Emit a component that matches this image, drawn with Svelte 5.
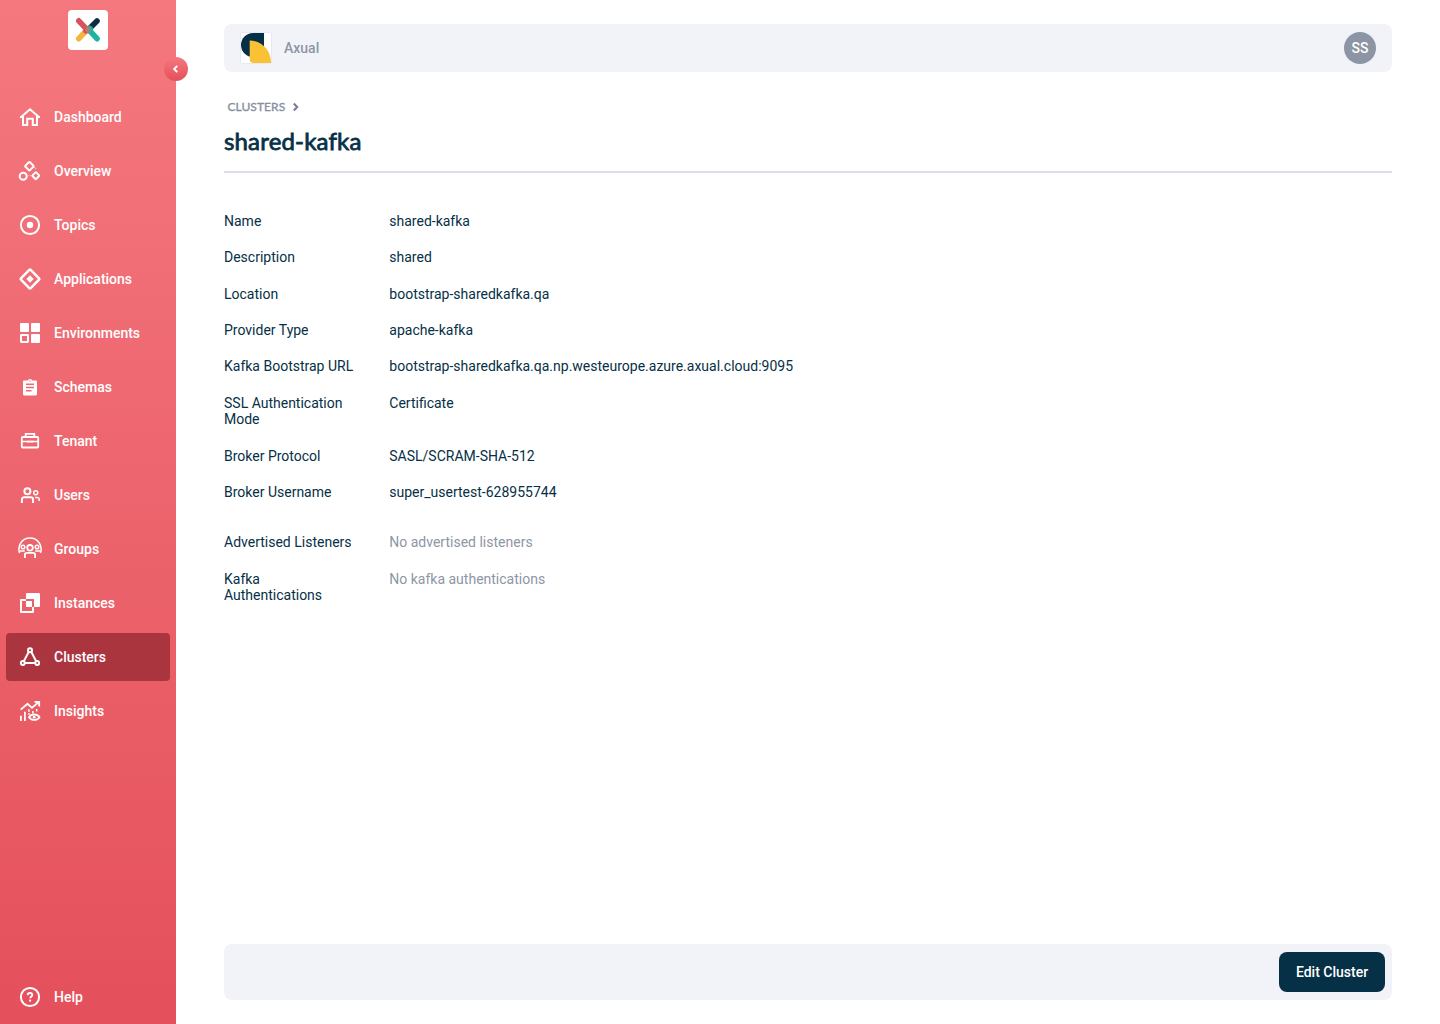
<script>
  const nav = ['Dashboard', 'Overview', 'Topics', 'Applications', 'Environments', 'Schemas', 'Tenant', 'Users', 'Groups', 'Instances', 'Clusters', 'Insights'];
  const active = 'Clusters';
  const details = [
    ['Name', 'shared-kafka'],
    ['Description', 'shared'],
    ['Location', 'bootstrap-sharedkafka.qa'],
    ['Provider Type', 'apache-kafka'],
    ['Kafka Bootstrap URL', 'bootstrap-sharedkafka.qa.np.westeurope.azure.axual.cloud:9095'],
    ['SSL Authentication Mode', 'Certificate'],
    ['Broker Protocol', 'SASL/SCRAM-SHA-512'],
    ['Broker Username', 'super_usertest-628955744']
  ];
  const extras = [
    ['Advertised Listeners', 'No advertised listeners'],
    ['Kafka Authentications', 'No kafka authentications']
  ];
</script>

{#snippet icon(name)}
  <svg class="icon" viewBox="0 0 24 24" width="24" height="24">
    {#if name === 'Dashboard'}
      <path class="line" d="M2.800 12.300 12 4.300l9.200 8M2 12h3v8h4.200v-6.300h5.600V20H19v-8h3" />
    {:else if name === 'Overview'}
      <g class="line"><circle cx="5.200" cy="17.300" r="3.500" /><rect x="8.200" y="4" width="6.400" height="6.400" rx=".8" transform="rotate(45 11.4 7.2)" /><rect x="15.200" y="14.100" width="5.200" height="5.200" rx=".8" transform="rotate(45 17.8 16.7)" /></g>
      <path class="thin" d="M15.700 8.500l1.800.2.300 2.200M10.200 16.700h3" stroke-dasharray="1 1" opacity=".7" />
    {:else if name === 'Topics'}
      <circle class="line" cx="12" cy="12" r="9.100" /><circle cx="12" cy="12" r="3.200" />
    {:else if name === 'Applications'}
      <rect class="bold" x="5.100" y="5.100" width="13.800" height="13.800" rx="1" transform="rotate(45 12 12)" />
      <path d="M12 8.300 15.700 12 12 15.700 8.300 12z" />
    {:else if name === 'Environments'}
      <rect x="2" y="2" width="9" height="9" rx="1" /><rect x="13" y="2" width="9" height="9" rx="1" /><rect x="13" y="13" width="9" height="9" rx="1" /><rect class="line" x="3" y="14" width="7" height="7" rx=".4" />
    {:else if name === 'Schemas'}
      <path fill-rule="evenodd" d="M6.200 5.500H10a2.100 2.100 0 0 1 4 0h3.800c.7 0 1.200.5 1.200 1.200v12.600c0 .7-.5 1.200-1.200 1.200H6.200c-.7 0-1.200-.5-1.200-1.200V6.700c0-.7.5-1.200 1.200-1.200zM8 8.600v1.500h8V8.600zM8 11.800v1.500h8v-1.500zM8 15v1.500h5.500V15zM11.400 5.400v1h1.200v-1z" />
    {:else if name === 'Tenant'}
      <rect class="heavy" x="3.800" y="8" width="16.400" height="10.500" rx="1" /><path class="heavy" d="M7.700 8V4.900h8.600V8" /><path class="mid" d="M4 12.500h5.500M14.500 12.500H20" /><path d="M9 11.600h6v2H9z" />
    {:else if name === 'Users'}
      <circle class="line" cx="9.400" cy="8.200" r="3" /><path class="line" d="M3.900 20v-3.500c0-1.400.8-2.300 2.300-2.300h6.500c1.500 0 2.300.9 2.300 2.300V20" /><circle class="mid" cx="17.700" cy="9.800" r="2" /><path class="mid" d="M17 14.400h2c1.400 0 2.200.7 2.200 2V18" />
    {:else if name === 'Groups'}
      <path class="mid" d="M1.600 16A11.100 11.100 0 1 1 22.400 16" /><circle class="heavy" cx="12" cy="10.800" r="2.800" /><circle class="mid" cx="5" cy="10" r="1.800" /><circle class="mid" cx="19" cy="10" r="1.800" />
      <path class="heavy" d="M6.900 21v-3.300c0-1.200.7-1.900 1.900-1.900h6.400c1.200 0 1.900.7 1.900 1.900V21" /><path class="mid" d="M2 13.900h4.800M17.200 13.900H22" />
    {:else if name === 'Instances'}
      <path fill-rule="evenodd" d="M9 2h12a1 1 0 0 1 1 1v12a1 1 0 0 1-1 1H8V3a1 1 0 0 1 1-1zM3 8h13v13a1 1 0 0 1-1 1H3a1 1 0 0 1-1-1V9a1 1 0 0 1 1-1zM4 10v10h10V10z" />
    {:else if name === 'Clusters'}
      <g class="line"><path d="m10.900 6.500-5.200 10M13.100 6.500l5.200 10M6 18h12" /><circle cx="12" cy="5.200" r="2" /><circle cx="4.800" cy="18" r="1.900" /><circle cx="19.200" cy="18" r="1.900" /></g>
    {:else if name === 'Insights'}
      <path class="heavy" d="M2.700 10.600 9.500 4.800l4.500 4L21 2.900M16.500 2.800h4.700v4.600M2.900 22v-5.200M6.900 22v-9.200" /><path class="mid" d="M10.900 10.200v5.500M14.900 12v2.400M18.700 10v3" stroke-dasharray="2.500 1.200" />
      <path class="heavy" d="M11 18.200c2.300-3.600 8.200-3.600 10.500 0-2.300 3.600-8.200 3.600-10.500 0z" /><circle cx="16.200" cy="18.200" r="1.400" />
    {:else if name === 'Help'}
      <circle class="line" cx="12" cy="12" r="9.100" /><path class="heavy" d="M9.700 10.300c0-1.600 1-2.300 2.300-2.300s2.300.8 2.300 2.100c0 1.500-2.100 1.500-2.100 3.200" /><circle cx="12.100" cy="15.700" r="1.100" />
    {/if}
  </svg>
{/snippet}

<div class="app">
  <aside>
    <div class="brand">
      <svg viewBox="0 0 40 40" width="40" height="40">
        <g fill="none" stroke-width="5.600" stroke-linecap="round">
          <path stroke="#0a2f43" d="M29 11 21 19" /><path stroke="#f2b63f" d="M10.800 28.700 17 22" />
          <path stroke="#1db39f" d="M22 18.500 21 20 29 28.700" /><path stroke="#d9535c" d="M10.800 10.800 19 19.500 18 21" />
        </g>
        <path fill="#a48676" d="m19.800 16 3 3.500-2.500 4.200-3.300-3.700z" />
      </svg>
    </div>
    <button class="collapse" aria-label="Collapse">
      <svg viewBox="0 0 24 24" width="24" height="24"><path d="m13.200 8.900-3 3.100 3 3.100" /></svg>
    </button>
    <nav>
      {#each nav as item}
        <a class="item" class:active={item === active} href="#{item}">{@render icon(item)}<span>{item}</span></a>
      {/each}
    </nav>
    <a class="item help" href="#Help">{@render icon('Help')}<span>Help</span></a>
  </aside>

  <main>
    <header>
      <svg class="tenant" viewBox="0 0 32 32" width="32" height="32">
        <rect x=".5" y=".5" width="31" height="31" rx="1.500" fill="#fff" stroke="#e8e9f1" />
        <path fill="#063046" d="M13 1h11v24H13A12 12 0 0 1 13 1z" />
        <path fill="#fff" d="M9.700 24.500h4V31h-4z" />
        <path fill="#fbc136" d="M9.700 8.500C22 9 31 18 31 31H13.500a3.800 3.800 0 0 1-3.800-3.800z" />
      </svg>
      <span class="org">Axual</span>
      <span class="avatar">SS</span>
    </header>
    <div class="crumbs">CLUSTERS <svg viewBox="0 0 8 10" width="8" height="10"><path d="m1.800 1.500 3.400 3.500-3.400 3.500" /></svg></div>
    <h1>shared-kafka</h1>
    <dl>
      {#each details as [label, value]}
        <div class="row"><dt>{label}</dt><dd>{value}</dd></div>
      {/each}
    </dl>
    <dl class="extras">
      {#each extras as [label, value]}
        <div class="row"><dt>{label}</dt><dd>{value}</dd></div>
      {/each}
    </dl>
    <footer><button class="edit">Edit Cluster</button></footer>
  </main>
</div>

<style>
  :global(body) { margin: 0; }
  .app { display: flex; height: 1024px; background: #fff; color: #063046; font-family: Roboto, sans-serif; font-size: 14px; }
  aside { position: relative; box-sizing: border-box; width: 176px; flex: none; display: flex; flex-direction: column; padding: 10px 6px 3px; background: linear-gradient(#f5787f, #e4505b); }
  .brand { width: 40px; height: 40px; margin: 0 auto; background: #fff; border-radius: 4px; overflow: hidden; }
  svg { display: block; flex: none; }
  .collapse { position: absolute; top: 57px; right: -12px; width: 24px; height: 24px; padding: 0; border: 0; border-radius: 50%; background: linear-gradient(#f5787f, #e4505b); }
  .collapse path { fill: none; stroke: #fff; stroke-width: 2; }
  nav { display: flex; flex-direction: column; gap: 6px; margin-top: 43px; }
  .item { box-sizing: border-box; display: flex; align-items: center; gap: 12px; height: 48px; padding: 0 12px; border-radius: 4px; color: #fff; font-weight: 500; text-decoration: none; }
  .active { background: #ab353f; }
  .help { margin-top: auto; }
  .icon { fill: #fff; }
  .line, .mid, .thin, .heavy, .bold { fill: none; stroke: #fff; }
  .line { stroke-width: 2; }
  .bold { stroke-width: 2.500; }
  .heavy { stroke-width: 1.800; }
  .mid { stroke-width: 1.500; }
  .thin { stroke-width: 1; }
  main { flex: 1; display: flex; flex-direction: column; padding: 24px 48px; }
  header { display: flex; align-items: center; height: 48px; padding: 0 16px; background: #f2f3f8; border-radius: 8px; }
  .org { margin-left: 12px; color: #8d96a5; font-weight: 500; }
  .avatar { display: grid; place-items: center; width: 32px; height: 32px; margin-left: auto; border-radius: 50%; background: #8c95a4; color: #fff; font-weight: 500; }
  .crumbs { display: flex; align-items: center; gap: 7px; height: 16px; margin-top: 26px; padding-left: 3.500px; color: #8790a0; font: 400 12px Lato, sans-serif; letter-spacing: .06px; -webkit-text-stroke: .35px #8790a0; }
  .crumbs svg { margin-top: 1px; }
  .crumbs path { fill: none; stroke: #737d90; stroke-width: 2; }
  h1 { height: 59px; margin: 0 0 39.700px; box-sizing: border-box; padding-top: 12px; border-bottom: 2px solid #dcdeea; font: 400 24px/30px Lato, sans-serif; letter-spacing: .17px; -webkit-text-stroke: .8px #063046; font-variant-ligatures: none; }
  dl { display: flex; flex-direction: column; gap: 20px; margin: 0; }
  .row { display: flex; line-height: 16.400px; }
  dt { width: 133.300px; margin-right: 32px; }
  dd { margin: 0; }
  .extras { margin-top: 33.800px; }
  .extras dd { color: #8d96a5; }
  footer { box-sizing: border-box; display: flex; justify-content: flex-end; align-items: center; height: 56px; margin-top: auto; padding: 0 7px; background: #f2f3f8; border-radius: 8px; }
  .edit { width: 106px; height: 40px; padding: 0; border: 0; border-radius: 8px; background: #063046; color: #fff; font: 500 14px Roboto, sans-serif; }
</style>
